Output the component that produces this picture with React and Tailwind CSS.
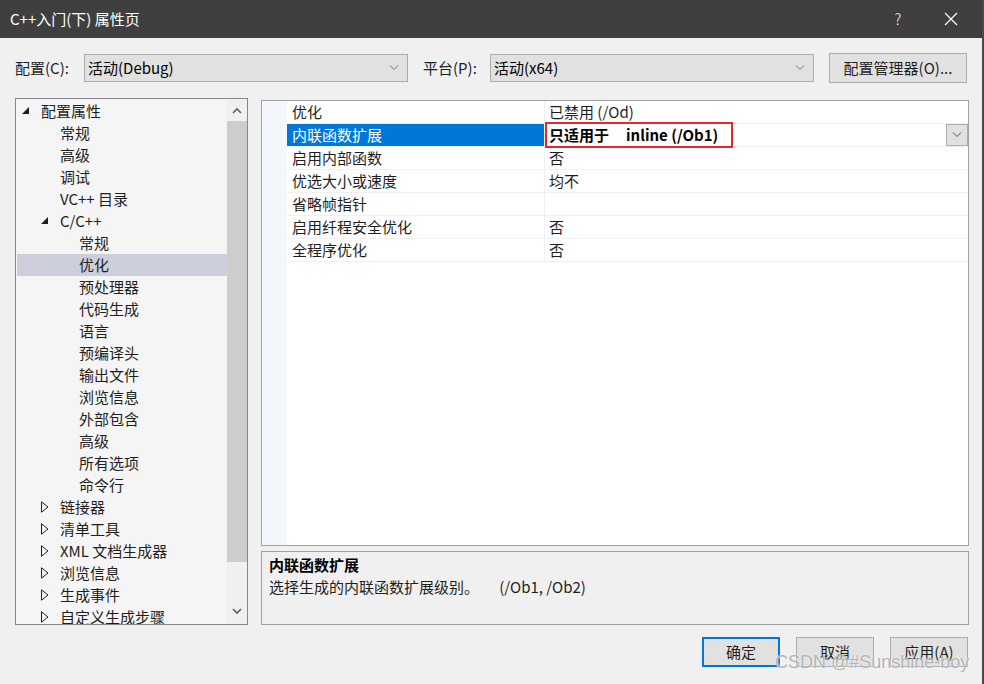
import React from "react";

const font = {
  fontFamily: '"Noto Sans CJK SC", "Noto Sans", sans-serif',
};

// tree rows: [label, depth, state] state: "open" | "closed" | null
const treeRows = [
  ["配置属性", 0, "open"],
  ["常规", 1, null],
  ["高级", 1, null],
  ["调试", 1, null],
  ["VC++ 目录", 1, null],
  ["C/C++", 1, "open"],
  ["常规", 2, null],
  ["优化", 2, null, true],
  ["预处理器", 2, null],
  ["代码生成", 2, null],
  ["语言", 2, null],
  ["预编译头", 2, null],
  ["输出文件", 2, null],
  ["浏览信息", 2, null],
  ["外部包含", 2, null],
  ["高级", 2, null],
  ["所有选项", 2, null],
  ["命令行", 2, null],
  ["链接器", 1, "closed"],
  ["清单工具", 1, "closed"],
  ["XML 文档生成器", 1, "closed"],
  ["浏览信息", 1, "closed"],
  ["生成事件", 1, "closed"],
  ["自定义生成步骤", 1, "closed"],
];

const props = [
  ["优化", "已禁用 (/Od)"],
  ["内联函数扩展", "只适用于     inline (/Ob1)", true],
  ["启用内部函数", "否"],
  ["优选大小或速度", "均不"],
  ["省略帧指针", ""],
  ["启用纤程安全优化", "否"],
  ["全程序优化", "否"],
];

const depthPad = ["pl-[6px]", "pl-[25px]", "pl-[44px]"];

function Chevron({ className = "" }) {
  return (
    <svg width="10" height="6" viewBox="0 0 10 6" className={className}>
      <path d="M1 0.5 L5 4.5 L9 0.5" fill="none" stroke="currentColor" strokeWidth="1" />
    </svg>
  );
}

function TreeIcon({ state }) {
  if (state === "open")
    return (
      <svg width="8" height="8" viewBox="0 0 8 8">
        <path d="M7 0 L7 7 L0 7 Z" fill="#1e1e1e" />
      </svg>
    );
  if (state === "closed")
    return (
      <svg width="8" height="12" viewBox="0 0 8 12">
        <path d="M0.5 0.8 L7 6 L0.5 11.2 Z" fill="none" stroke="#1e1e1e" strokeWidth="1" />
      </svg>
    );
  return null;
}

function Combo({ value }) {
  return (
    <div className="w-[324px] h-[28px] bg-[#e1e1e1] border border-[#adadad] flex items-center pl-[3px] pr-[8px]">
      <span className="flex-1 text-[15px] leading-[20px] text-black">{value}</span>
      <Chevron className="text-[#707070]" />
    </div>
  );
}

export default function App() {
  return (
    <div
      style={font}
      className="relative w-[984px] h-[684px] bg-[#f0f0f0] flex flex-col border-r-2 border-[#4a4a4a] overflow-hidden text-[#1e1e1e]"
    >
      {/* title bar */}
      <div className="h-[38px] bg-[#3f3f3f] flex items-center pl-[10px] text-white shrink-0">
        <span className="flex-1 text-[15px] leading-[20px]">C++入门(下) 属性页</span>
        <span className="w-[20px] text-center text-[15px] mr-[36px] font-light">?</span>
        <svg width="14" height="14" viewBox="0 0 14 14" className="mr-[24px]">
          <path d="M1 1 L13 13 M13 1 L1 13" stroke="white" strokeWidth="1.2" />
        </svg>
      </div>

      <div className="flex flex-col pl-[15px] pr-[14px] flex-1">
        {/* config row */}
        <div className="mt-[14px] h-[32px] flex items-center">
          <span className="w-[69px] text-[15px] leading-[20px]">配置(C):</span>
          <Combo value="活动(Debug)" />
          <span className="ml-[15px] w-[67px] text-[15px] leading-[20px]">平台(P):</span>
          <Combo value="活动(x64)" />
          <button className="ml-[15px] w-[138px] h-[30px] bg-[#e1e1e1] border border-[#adadad] text-[15px] leading-[20px]">
            配置管理器(O)...
          </button>
        </div>

        {/* main panels */}
        <div className="mt-[14px] flex">
          {/* tree */}
          <div className="w-[233px] h-[527px] shrink-0 border border-[#828790] bg-[#f5f5f5] flex">
            <div className="flex-1 pt-[1px] overflow-hidden">
              {treeRows.map(([label, depth, state, selected], i) => (
                <div
                  key={i}
                  className={`h-[22px] flex items-center ${depthPad[depth]} ${selected ? "bg-[#cccedb] ml-[1px]" : ""}`}
                >
                  <span className={`w-[19px] flex items-center shrink-0 ${selected ? "-ml-[1px]" : ""}`}>
                    <TreeIcon state={state} />
                  </span>
                  <span className="text-[15px] leading-[20px] whitespace-nowrap">{label}</span>
                </div>
              ))}
            </div>
            <div className="w-[20px] bg-[#f0f0f0] flex flex-col">
              <div className="h-[22px] flex items-center justify-center text-[#606060]">
                <svg width="10" height="7" viewBox="0 0 10 7">
                  <path d="M1 6 L5 2 L9 6" fill="none" stroke="currentColor" strokeWidth="1.6" />
                </svg>
              </div>
              <div className="h-[441px] bg-[#cdcdcd]" />
              <div className="flex-1" />
              <div className="h-[26px] flex items-center justify-center text-[#606060]">
                <svg width="10" height="7" viewBox="0 0 10 7">
                  <path d="M1 1 L5 5 L9 1" fill="none" stroke="currentColor" strokeWidth="1.6" />
                </svg>
              </div>
            </div>
          </div>

          {/* right column */}
          <div className="ml-[13px] w-[708px] shrink-0 mt-[2px] flex flex-col">
            <div className="h-[446px] bg-white border border-[#a0a0a0] flex">
              <div className="w-[25px] bg-[#f3f6fb]" />
              <div className="flex-1 flex flex-col">
                {props.map(([name, value, selected], i) => (
                  <div key={i} className="h-[23px] flex border-b border-[#f0f0f0]">
                    <div
                      className={`w-[258px] pl-[5px] flex items-center border-r border-[#f0f0f0] ${
                        selected ? "bg-[#0078d7] text-white" : ""
                      }`}
                    >
                      <span className="text-[15px] leading-[20px]">{name}</span>
                    </div>
                    <div className="flex-1 relative flex items-center pl-[4px]">
                      <span
                        className={`text-[15px] leading-[20px] whitespace-pre ${selected ? "font-bold text-black" : ""}`}
                      >
                        {value}
                      </span>
                      {selected && (
                        <>
                          <div className="absolute left-0 -top-[2px] w-[188px] h-[26px] border-2 border-[#e8272b]" />
                          <div className="absolute right-0 top-0 w-[22px] h-[22px] bg-[#e1e1e1] border border-[#adadad] flex items-center justify-center text-[#505050]">
                            <Chevron />
                          </div>
                        </>
                      )}
                    </div>
                  </div>
                ))}
              </div>
            </div>

            <div className="mt-[5px] h-[74px] border border-[#a0a0a0] bg-[#f0f0f0] px-[7px] pt-[2px]">
              <div className="text-[15px] leading-[22px] font-bold text-black">内联函数扩展</div>
              <div className="text-[15px] leading-[22px] whitespace-pre">
                选择生成的内联函数扩展级别。      (/Ob1, /Ob2)
              </div>
            </div>
          </div>
        </div>

        {/* bottom buttons */}
        <div className="mt-[12px] flex justify-end">
          <button className="w-[78px] h-[30px] bg-[#e1e1e1] border-2 border-[#0078d7] text-[15px] leading-[20px]">
            确定
          </button>
          <button className="ml-[16px] w-[78px] h-[30px] bg-[#e1e1e1] border border-[#adadad] text-[15px] leading-[20px]">
            取消
          </button>
          <button className="ml-[16px] w-[78px] h-[30px] bg-[#e1e1e1] border border-[#adadad] text-[15px] leading-[20px]">
            应用(A)
          </button>
        </div>
      </div>

      {/* watermark */}
      <div
        className="absolute left-[775px] top-[651px] text-[18px] leading-[22px] text-[#b4b4b4] whitespace-nowrap"
        style={{ fontFamily: '"Liberation Sans", Arial, sans-serif', textShadow: "0 0 2px #ffffff" }}
      >
        CSDN @#Sunshine-boy
      </div>
    </div>
  );
}
